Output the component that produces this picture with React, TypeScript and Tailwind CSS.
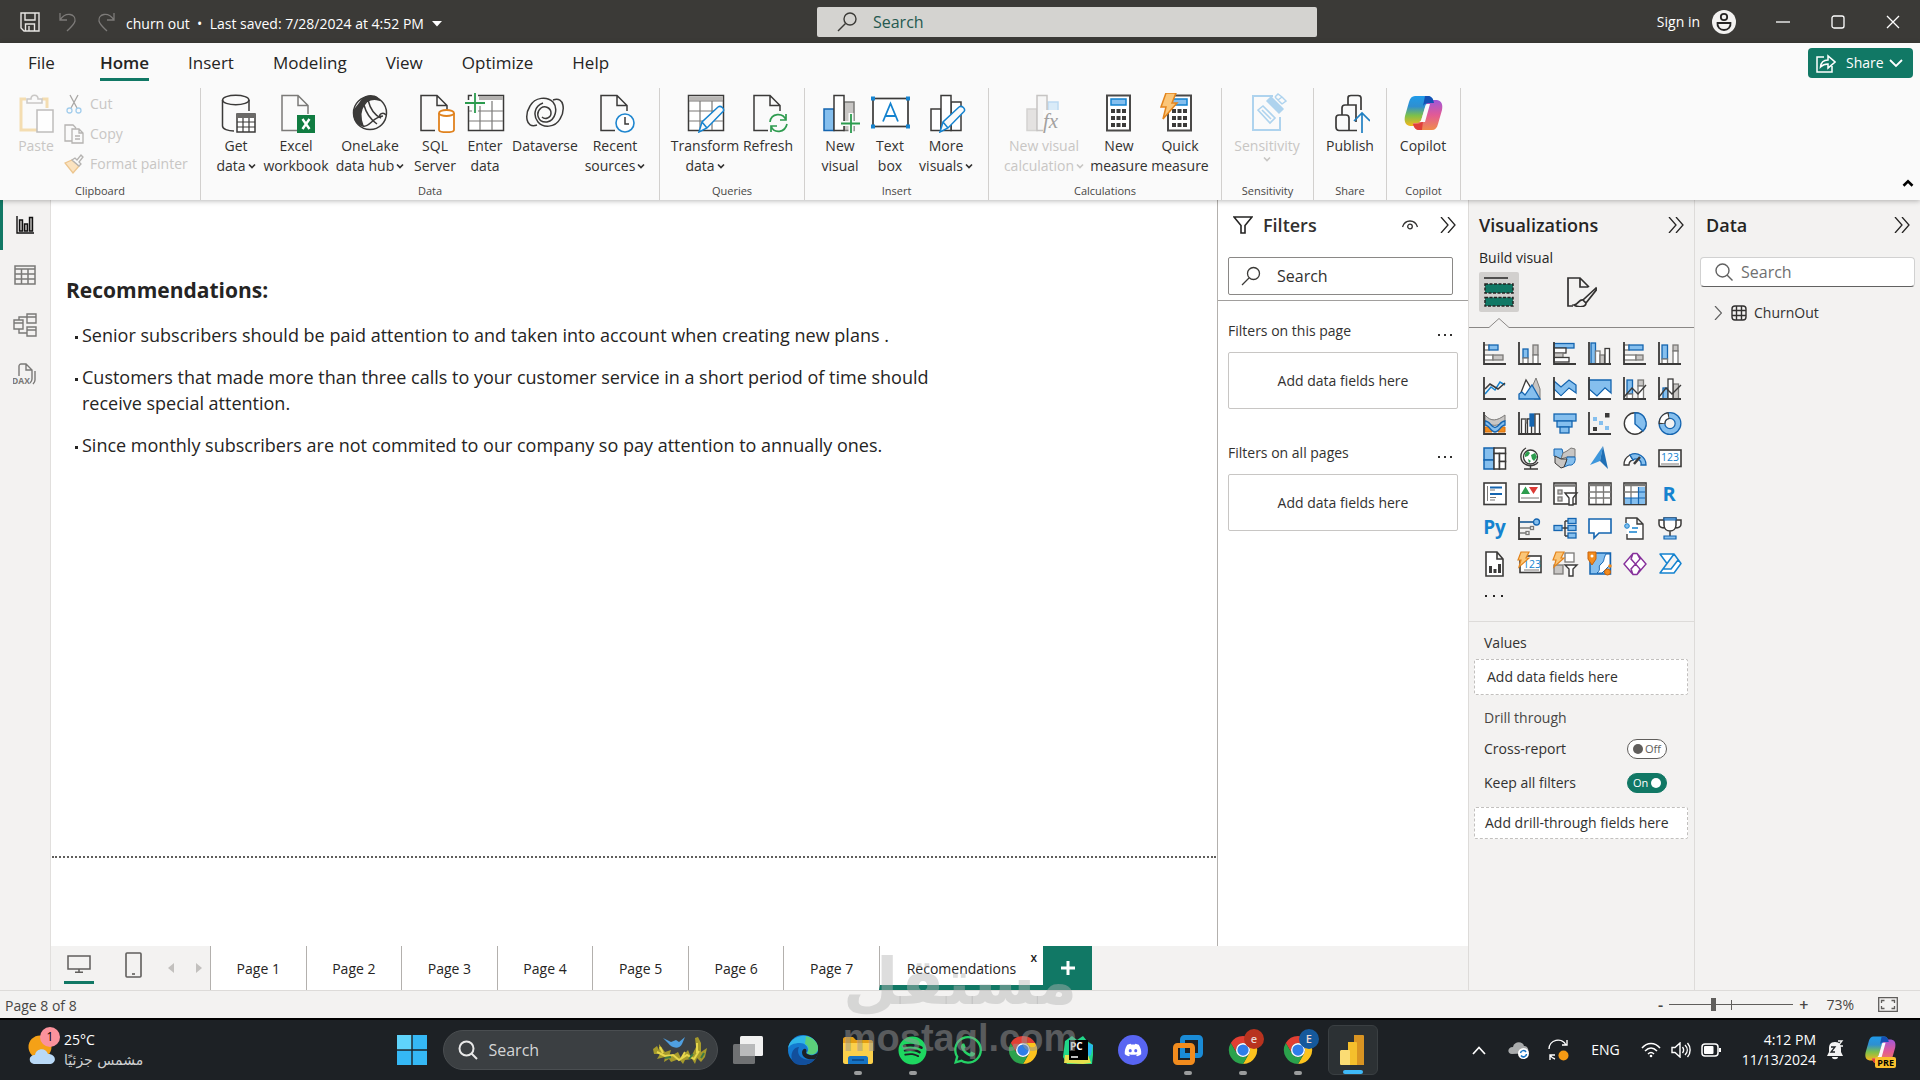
import React from "react";
import type { ReactNode } from "react";
import { FaDiscord, FaSpotify, FaWhatsapp } from "react-icons/fa";

const INK = "#3b3a39";
const BLUE = "#1565b0";
const SKY = "#85bfee";
const MID = "#7a7977";
const LIGHT = "#c8c6c4";

type Box = [number, number, number, number, string, string];

/* Plain rectangles given as [x, y, width, height, fill, stroke] */
function Boxes({ list, sw = 1.3 }: { list: Box[]; sw?: number }) {
  return (
    <>
      {list.map(([x, y, w, h, f, s], i) => (
        <rect key={i} x={x} y={y} width={w} height={h} fill={f} stroke={s} strokeWidth={sw} />
      ))}
    </>
  );
}

function Axis() {
  return <path d="M1 0V22H23" fill="none" stroke={INK} strokeWidth="1.8" />;
}

/* ---------- Ribbon icons (40 x 40) ---------- */

function Big({ children }: { children: ReactNode }) {
  return (
    <svg viewBox="0 0 40 40" className="size-10 shrink-0" fill="none" stroke={INK} strokeWidth="1.5" aria-hidden="true">
      {children}
    </svg>
  );
}

const Doc = () => <path d="M20 37.5H6V2.5H22L32 12.5V18M22 2.5V12.5H32" />;
const Pencil = () => (
  <path d="M14 39L17 29L33 14C36 12 40 16 38 18.500L22 35ZM17 29L22 35" fill="#fafafa" stroke="#1583cf" />
);
const CalcPad = ({ x }: { x: number }) => (
  <g>
    <rect x={x} y="2.500" width="23" height="35" fill="#fff" stroke="#4a4948" strokeWidth="2" />
    <rect x={x + 4} y="6" width="15" height="6" fill={SKY} stroke="#1583cf" />
    {[16, 23, 30].map((y) =>
      [4, 9.5, 15].map((dx) => <rect key={`${y}-${dx}`} x={x + dx} y={y} width="4" height="4" fill={INK} stroke="none" />)
    )}
  </g>
);

const ribbonIcons: Record<string, ReactNode> = {
  paste: (
    <Big>
      <g opacity=".85">
        <path d="M10 6H5V37H21M26 6H31V15" stroke="#f3d9a5" strokeWidth="3" />
        <path d="M11 10V6H15C15 1 22 1 22 6H26V10Z" fill="#fafafa" stroke="#c2c0be" />
        <rect x="21" y="17" width="16" height="22" fill="#fff" stroke="#b5b3b1" />
      </g>
    </Big>
  ),
  getData: (
    <Big>
      <path d="M6.500 7V33C6.500 36 12 38 18 38M33 7V18" />
      <ellipse cx="19.750" cy="7" rx="13.200" ry="4.800" />
      <rect x="21" y="21" width="18" height="18" fill="#fff" />
      <path d="M21 23H39" strokeWidth="4" stroke="#6b6a68" />
      <path d="M21 29H39M21 34H39M27 25V39M33 25V39" strokeWidth="1.200" />
    </Big>
  ),
  excel: (
    <Big>
      <path d="M22 37.500H6V2.500H22L32 12.500V21M22 2.500V12.500H32" stroke="#7b7a78" />
      <rect x="21" y="22" width="18" height="18" fill="#107c41" stroke="none" />
      <path d="M26.500 26L33.500 36M33.500 26L26.500 36" stroke="#fff" strokeWidth="2.400" />
    </Big>
  ),
  oneLake: (
    <Big>
      <circle cx="20" cy="20" r="16.500" />
      <path d="M12 7C17 1 27 2 29 7C23 5 17 7 14 12C10 17 10 25 13 33C7 31 3 25 4 18C6 14 9 12 12 7Z" fill={INK} />
      <path d="M14 12C16 20 20 26 27 31M18 7C20 15 24 22 31 25C27 22 33 18 36 22M13 33C20 35 22 24 33 23" />
    </Big>
  ),
  sql: (
    <Big>
      <Doc />
      <path d="M24 20V37C24 40 39 40 39 37V20" fill="#fff" stroke="#e0821e" strokeWidth="1.800" />
      <ellipse cx="31.500" cy="20" rx="7.500" ry="3" fill="#fff" stroke="#e0821e" strokeWidth="1.800" />
    </Big>
  ),
  enter: (
    <Big>
      <rect x="3.500" y="2.500" width="35" height="35" fill="#fff" />
      <path d="M14 5H38" stroke="#b3b1af" strokeWidth="4" />
      <path d="M4 18H38M4 28H38M15 8V37M27 8V37" strokeWidth="1.200" stroke={MID} />
      <path d="M0 10H20M10 0V20" stroke="#fafafa" strokeWidth="6" />
      <path d="M0 10H20M10 0V20" stroke="#2b9b4e" strokeWidth="1.800" />
    </Big>
  ),
  dataverse: (
    <Big>
      <path d="M12 32C0 36 0 21 5 13C10 4 22 3 28 9C33 15 31 27 22 29C13 30 10 20 16 15C20 12 26 15 26 20C26 25 20 27 17 24" />
      <path d="M28 7C40 3 40 18 35 26C30 35 18 35 13 29C8 23 9 13 18 10" />
    </Big>
  ),
  recent: (
    <Big>
      <Doc />
      <circle cx="30" cy="30" r="9" fill="#fff" stroke="#1f86cf" strokeWidth="1.600" />
      <path d="M30 24V31H34" />
    </Big>
  ),
  transform: (
    <Big>
      <rect x="3.500" y="2.500" width="35" height="35" fill="#fff" />
      <path d="M4 5.500H38" stroke="#b9b7b5" strokeWidth="4" />
      <path d="M4 8H38M4 18H38M4 28H38M15 8V37M27 8V37" strokeWidth="1.200" stroke={MID} />
      <Pencil />
    </Big>
  ),
  refresh: (
    <Big>
      <Doc />
      <path d="M22 29C23 20 35 19 38 27M38 21V27H32M39 31C37 40 26 41 23 33M23 39V33H29" stroke="#2e9b4f" strokeWidth="1.700" />
    </Big>
  ),
  newVisual: (
    <Big>
      <Boxes sw={1.5} list={[[4, 16, 10, 21.5, SKY, BLUE], [24, 9, 10, 28.500, LIGHT, MID], [14, 2.500, 10, 35, "#fff", INK]]} />
      <path d="M20 30.500H40M31 20V40" stroke="#fafafa" strokeWidth="5" />
      <path d="M21 30.500H40M31 21V40" stroke="#2b9b4e" strokeWidth="1.800" />
    </Big>
  ),
  textBox: (
    <Big>
      <rect x="3" y="5.500" width="35" height="28" fill="#fff" strokeWidth="1.700" />
      {[[1, 3.5], [36, 3.5], [1, 31.500], [36, 31.500]].map(([x, y]) => (
        <rect key={`${x}-${y}`} x={x} y={y} width="4" height="4" fill="#1583cf" stroke="none" />
      ))}
      <path d="M13 28.500L20.500 10.500L28 28.500M15.500 23H25.500" stroke="#1583cf" strokeWidth="1.800" />
    </Big>
  ),
  moreVisuals: (
    <Big>
      <Boxes sw={1.500} list={[[5, 16, 10, 21.500, "#fff", INK], [25, 9, 10, 28.500, "#fff", INK], [15, 2.500, 10, 35, "#fff", INK]]} />
      <Pencil />
    </Big>
  ),
  visualCalc: (
    <Big>
      <g opacity=".75">
        <Boxes sw={1.500} list={[[3, 16, 10, 21.500, "#dddbd9", LIGHT], [24, 9, 10, 12, "#cfe6f8", "#a9d0ef"], [13, 2.500, 10, 35, "#f5f5f5", "#b5b3b1"]]} />
      </g>
      <rect x="19" y="17" width="20" height="22" fill="#fafafa" stroke="none" />
      <text x="19" y="35" fontSize="21" fontStyle="italic" fontFamily="Liberation Serif, serif" fill="#a3a19f" stroke="none">
        fx
      </text>
    </Big>
  ),
  newMeasure: (
    <Big>
      <CalcPad x={8} />
    </Big>
  ),
  quickMeasure: (
    <Big>
      <CalcPad x={8} />
      <path d="M6 0H16L12 10H17L3 26L6 14H1Z" fill="#fbc678" stroke="#e3841c" />
    </Big>
  ),
  sensitivity: (
    <Big>
      <g stroke="#aed3ee">
        <path d="M26 3H6V37H33V24" strokeWidth="2" />
        <path d="M11 17L16 13L28 25L23 30ZM15 17L24 26" strokeWidth="1.600" />
        <path d="M20 8L32 20L36 16L24 4Z" fill="#aed3ee" />
        <path d="M28 4L31 1L35 4L39 8L35 11M28 4L35 11M35 4L31 7" />
      </g>
    </Big>
  ),
  publish: (
    <Big>
      <path d="M12 22V15C12 13 13 12 15 12H18V5C18 3 19 2.500 21 2.500H28C30 2.500 31 3.500 31 5V17M26 26V12H18M6 25C6 23 7 22 9 22H16C18 22 19 23 19 25V37.500H9C7 37.500 6 36 6 34ZM26 29V12M19 37.500H27" strokeWidth="1.700" />
      <path d="M32 40V20M24 28L32 20L40 28" stroke="#1f7fc2" strokeWidth="1.700" />
    </Big>
  ),
  copilot: <CopilotLogo id="ribbon" className="size-10" />,
};

function CopilotLogo({ id, className }: { id: string; className: string }) {
  const shape = "M12 3H25C28 3 30 5 31 10H28C24 10 23 12 22 15L18 28C17 32 15 33 12 33H7C2 32 1 28 2 23L6 9C7 5 9 3 12 3Z";
  return (
    <svg viewBox="0 0 40 40" className={className} aria-hidden="true">
      <defs>
        <linearGradient id={`${id}-cool`} x1="0" y1="0" x2="0" y2="1">
          <stop offset="0" stopColor="#1f9bea" />
          <stop offset=".35" stopColor="#2f8fd0" />
          <stop offset=".65" stopColor="#7cc04b" />
          <stop offset="1" stopColor="#f6b71c" />
        </linearGradient>
        <linearGradient id={`${id}-warm`} x1="0" y1="1" x2="0" y2="0">
          <stop offset="0" stopColor="#a157d8" />
          <stop offset=".5" stopColor="#e25a95" />
          <stop offset="1" stopColor="#f08c4a" />
        </linearGradient>
      </defs>
      <path d={shape} fill={`url(#${id}-cool)`} />
      <path d={shape} fill={`url(#${id}-warm)`} transform="rotate(180 20.500 20)" />
      <path d="M22 3H25C28 3 30 5 31 10H28C24 10 22 10 20 13Z" fill="#1450b4" />
      <path d="M19 37H16C13 37 11 35 10 31H13C16 31 18 30 20 28Z" fill="#e0403a" />
      <path d="M24 11H27L22 29H16C17 29 18 28 18.500 26L22 14C22.500 12 23 11 24 11Z" fill="#fafafa" />
    </svg>
  );
}

function Caret({ className = "w-2", thin = false }: { className?: string; thin?: boolean }) {
  return (
    <svg viewBox="0 0 8 6" className={`inline-block ${className}`} fill="none" stroke="currentColor" strokeWidth={thin ? 0.9 : 1.7} aria-hidden="true">
      <path d="M1 1.500L4 4.500L7 1.500" />
    </svg>
  );
}

type RibbonItem = { icon: string; lines: string[]; width: string; caret?: boolean; disabled?: boolean };

const dataItems: RibbonItem[] = [
  { icon: "getData", lines: ["Get", "data"], width: "w-[50px]", caret: true },
  { icon: "excel", lines: ["Excel", "workbook"], width: "w-[70px]" },
  { icon: "oneLake", lines: ["OneLake", "data hub"], width: "w-[78px]", caret: true },
  { icon: "sql", lines: ["SQL", "Server"], width: "w-[52px]" },
  { icon: "enter", lines: ["Enter", "data"], width: "w-12" },
  { icon: "dataverse", lines: ["Dataverse"], width: "w-[72px]" },
  { icon: "recent", lines: ["Recent", "sources"], width: "w-[68px]", caret: true },
];
const queryItems: RibbonItem[] = [
  { icon: "transform", lines: ["Transform", "data"], width: "w-[70px]", caret: true },
  { icon: "refresh", lines: ["Refresh"], width: "w-14" },
];
const insertItems: RibbonItem[] = [
  { icon: "newVisual", lines: ["New", "visual"], width: "w-[50px]" },
  { icon: "textBox", lines: ["Text", "box"], width: "w-[50px]" },
  { icon: "moreVisuals", lines: ["More", "visuals"], width: "w-[62px]", caret: true },
];
const calcItems: RibbonItem[] = [
  { icon: "visualCalc", lines: ["New visual", "calculation"], width: "w-[90px]", caret: true, disabled: true },
  { icon: "newMeasure", lines: ["New", "measure"], width: "w-[60px]" },
  { icon: "quickMeasure", lines: ["Quick", "measure"], width: "w-[62px]" },
];

function RibbonButton({ item }: { item: RibbonItem }) {
  return (
    <button
      type="button"
      disabled={item.disabled}
      className={`${item.width} flex shrink-0 flex-col items-center text-sm leading-5 whitespace-nowrap ${item.disabled ? "text-[#c8c6c4]" : "text-[#323130]"}`}
    >
      {ribbonIcons[item.icon]}
      <span className="mt-[3px]">{item.lines[0]}</span>
      <span className="flex items-center gap-0.5">
        {item.lines[1]}
        {item.caret && <Caret />}
      </span>
    </button>
  );
}

function Group({ label, width, children }: { label: string; width: string; children: ReactNode }) {
  return (
    <section className={`${width} flex flex-col border-r border-[#d2d0ce]`} aria-label={label}>
      <div className="flex pt-[5px] pl-2.5">{children}</div>
      <p className="mt-auto pb-px text-center text-[11px] leading-4 text-[#484644]">{label}</p>
    </section>
  );
}

function TitleBar() {
  return (
    <header className="flex h-[43px] shrink-0 items-center bg-[#3b3a37] text-white">
      <div className="flex w-[42.55%] items-center">
        <button type="button" aria-label="Save" className="ml-5">
          <svg viewBox="0 0 20 20" className="size-5" fill="none" stroke="#e8e6e4" strokeWidth="1.400">
            <path d="M1 1H19V19H4L1 16ZM5 1V8H15V1M5.500 19V12H14.500V19M9 14V19" />
          </svg>
        </button>
        <button type="button" aria-label="Undo" className="ml-[18px]">
          <svg viewBox="0 0 20 20" className="size-5" fill="none" stroke="#7d7b79" strokeWidth="1.300">
            <path d="M2 1V8H9M2 8C8 -1 18 2 17 9C16 13 12 16 9 19" />
          </svg>
        </button>
        <button type="button" aria-label="Redo" className="ml-[18px]">
          <svg viewBox="0 0 20 20" className="size-5" fill="none" stroke="#7d7b79" strokeWidth="1.300">
            <path d="M18 1V8H11M18 8C12 -1 2 2 3 9C4 13 8 16 11 19" />
          </svg>
        </button>
        <button type="button" className="mt-1 ml-2.5 flex items-center gap-2 text-sm whitespace-pre">
          churn out  •  Last saved: 7/28/2024 at 4:52 PM
          <svg viewBox="0 0 10 6" className="w-2.5" fill="#fff" aria-hidden="true">
            <path d="M0 0H10L5 5.500Z" />
          </svg>
        </button>
      </div>
      <label className="flex h-[30px] w-[500px] items-center gap-4 rounded-xs bg-[#d4d3d0] px-5">
        <svg viewBox="0 0 20 20" className="size-5" fill="none" stroke="#3b3a37" strokeWidth="1.400" aria-hidden="true">
          <circle cx="13" cy="7" r="6" />
          <path d="M8.500 11.500L1 19" />
        </svg>
        <input aria-label="Search" placeholder="Search" className="min-w-0 flex-1 bg-transparent text-base outline-none placeholder:text-[#25594f]" />
      </label>
      <div className="flex flex-1 items-center justify-end">
        <button type="button" className="flex items-center gap-3 text-sm">
          Sign in
          <svg viewBox="0 0 24 24" className="size-6" fill="none" stroke="#252423" strokeWidth="1.800" aria-hidden="true">
            <circle cx="12" cy="12" r="12" fill="#f3f2f1" stroke="none" />
            <circle cx="12" cy="7" r="3.200" />
            <path d="M5.500 13H18.500C19 17 16 20 12 20S5 17 5.500 13Z" />
          </svg>
        </button>
        <button type="button" aria-label="Minimize" className="ml-10">
          <svg viewBox="0 0 14 14" className="size-3.5" stroke="#fff" strokeWidth="1.300">
            <path d="M0 7H14" />
          </svg>
        </button>
        <button type="button" aria-label="Maximize" className="ml-[41px]">
          <svg viewBox="0 0 14 14" className="size-3.5" stroke="#fff" fill="none" strokeWidth="1.300">
            <rect x="1" y="1" width="12" height="12" rx="2" />
          </svg>
        </button>
        <button type="button" aria-label="Close" className="mr-5 ml-[41px]">
          <svg viewBox="0 0 14 14" className="size-3.5" stroke="#fff" strokeWidth="1.300">
            <path d="M1 1L13 13M13 1L1 13" />
          </svg>
        </button>
      </div>
    </header>
  );
}

function Ribbon() {
  return (
    <div className="relative z-10 flex shrink-0 flex-col bg-[#fafafa] shadow-[0_1px_5px_rgba(0,0,0,0.28)]">
      <nav className="flex h-[45px] items-start justify-between pr-[7px] text-[17px] text-[#252423]">
        <div className="flex gap-[39px] pt-2 pl-7">
          {["File", "Home", "Insert", "Modeling", "View", "Optimize", "Help"].map((t) => (
            <a
              key={t}
              href="#"
              className={`leading-6 ${t === "Home" ? "border-b-3 border-[#117865] pb-[3px] font-semibold" : ""} ${t === "File" ? "mr-1.5" : ""}`}
            >
              {t}
            </a>
          ))}
        </div>
        <button type="button" className="mt-[5px] flex h-[30px] w-[105px] items-center rounded bg-[#117865] pl-2 text-sm text-white">
          <svg viewBox="0 0 20 20" className="size-5" fill="none" stroke="#fff" strokeWidth="1.500" aria-hidden="true">
            <path d="M8 4H1V19H16V13M4.500 14C5 9 8 7 12 7V3L19 9L12 15V11C9 11 6.500 12 4.500 14Z" />
          </svg>
          <span className="ml-2.5">Share</span>
          <Caret className="ml-1 w-4" thin />
        </button>
      </nav>
      <div className="flex h-[112px] items-stretch">
        <section className="flex w-[201px] flex-col border-r border-[#d2d0ce]" aria-label="Clipboard">
          <div className="flex pt-[5px] pl-4 text-sm text-[#c8c6c4]">
            <button type="button" disabled className="flex w-10 flex-col items-center leading-5">
              {ribbonIcons.paste}
              <span className="mt-[3px]">Paste</span>
            </button>
            <div className="-mt-1 flex flex-col pl-2">
              <button type="button" disabled className="flex h-[30px] items-center gap-1.5">
                <svg viewBox="0 0 20 20" className="size-5" fill="none" stroke="#a9a7a5" strokeWidth="1.300" aria-hidden="true">
                  <path d="M6 1L13 14M14 1L7 14" />
                  <circle cx="5.500" cy="16.500" r="2.500" stroke="#a3cdec" />
                  <circle cx="14.500" cy="16.500" r="2.500" stroke="#a3cdec" />
                </svg>
                Cut
              </button>
              <button type="button" disabled className="flex h-[30px] items-center gap-1.5">
                <svg viewBox="0 0 20 20" className="size-5" fill="#fafafa" stroke="#b5b3b1" strokeWidth="1.300" aria-hidden="true">
                  <path d="M8 17H1V1H9L12 4M8 5V19H19V9L15 5ZM15 5V9H19M11 12H16M11 15H16" />
                </svg>
                Copy
              </button>
              <button type="button" disabled className="flex h-[30px] items-center gap-1.5 whitespace-nowrap">
                <svg viewBox="0 0 20 20" className="size-5" fill="#fafafa" stroke="#b5b3b1" strokeWidth="1.300" aria-hidden="true">
                  <path d="M1 9L8 6L15 12L9 19Z" fill="#fbe3c0" stroke="#ecc58e" />
                  <path d="M8 6L11 4L13 6L17 1L19 3L15 8L17 10L15 12Z" />
                </svg>
                Format painter
              </button>
            </div>
          </div>
          <p className="mt-auto pb-px text-center text-[11px] leading-4 text-[#484644]">Clipboard</p>
        </section>
        <Group label="Data" width="w-[459px]">{dataItems.map((i) => <RibbonButton key={i.icon} item={i} />)}</Group>
        <Group label="Queries" width="w-[145px]">{queryItems.map((i) => <RibbonButton key={i.icon} item={i} />)}</Group>
        <Group label="Insert" width="w-[184px]">{insertItems.map((i) => <RibbonButton key={i.icon} item={i} />)}</Group>
        <Group label="Calculations" width="w-[233px]">{calcItems.map((i) => <RibbonButton key={i.icon} item={i} />)}</Group>
        <Group label="Sensitivity" width="w-[92px]">
          <RibbonButton item={{ icon: "sensitivity", lines: ["Sensitivity", ""], width: "w-[70px]", caret: true, disabled: true }} />
        </Group>
        <Group label="Share" width="w-[73px]">
          <RibbonButton item={{ icon: "publish", lines: ["Publish"], width: "w-[52px]" }} />
        </Group>
        <Group label="Copilot" width="w-[74px]">
          <RibbonButton item={{ icon: "copilot", lines: ["Copilot"], width: "w-[52px]" }} />
        </Group>
        <button type="button" aria-label="Collapse ribbon" className="mt-auto mr-1.5 mb-1.5 ml-auto">
          <Caret className="w-3 rotate-180" />
        </button>
      </div>
    </div>
  );
}

function ViewRail() {
  const item = "flex h-[50px] items-center justify-center border-l-3 pr-[3px]";
  return (
    <nav className="flex w-[51px] shrink-0 flex-col border-r border-[#e1dfdd] bg-[#f3f2f1]" aria-label="Views">
      <button type="button" aria-label="Report view" className={`${item} border-[#117865]`}>
        <svg viewBox="0 0 18 18" className="size-[18px]" fill="#b3b1af" stroke="#111" strokeWidth="1.400">
          <path d="M1 0V17H18" fill="none" />
          <path d="M3.500 4H6.500V15H3.500ZM8.500 8H11.500V15H8.500ZM13.500 1.500H16.500V15H13.500Z" />
        </svg>
      </button>
      <button type="button" aria-label="Table view" className={`${item} border-transparent`}>
        <svg viewBox="0 0 22 20" className="w-[22px]" fill="none" stroke="#7a7977" strokeWidth="1.500">
          <path d="M1 1H21V19H1ZM1 4H21M1 9H21M1 14H21M7.500 4V19M14 4V19" />
        </svg>
      </button>
      <button type="button" aria-label="Model view" className={`${item} border-transparent`}>
        <svg viewBox="0 0 24 24" className="size-6" fill="none" stroke="#7a7977" strokeWidth="1.400">
          <path d="M14 1H23V10H14ZM14 4H23M1 7H10V16H1ZM1 10H10M14 14H23V23H14ZM14 17H23M6 7V4H14M6 16V20H14" />
        </svg>
      </button>
      <button type="button" aria-label="DAX query view" className={`${item} border-transparent`}>
        <svg viewBox="0 0 24 24" className="size-6" fill="none" stroke="#7a7977" strokeWidth="1.400">
          <path d="M6 13V3C6 2 7 1 8 1H13L19 7V16C19 18 18 19 17 20M13 1V7H19M22 8V17C22 19 21 20 20 21" />
          <text x="-1" y="21" fontSize="8.500" fontWeight="700" fontFamily="Open Sans, sans-serif" fill="#7a7977" stroke="none">DAX</text>
        </svg>
      </button>
    </nav>
  );
}

function Chevrons() {
  return (
    <svg viewBox="0 0 16 16" className="size-4" fill="none" stroke="#252423" strokeWidth="1.300" aria-hidden="true">
      <path d="M1 0L8 8L1 16M8 0L15 8L8 16" />
    </svg>
  );
}

function FilterSection({ title }: { title: string }) {
  return (
    <section className="mb-[34px]">
      <div className="flex items-center justify-between pr-1.5 text-sm leading-5">
        <h3>{title}</h3>
        <button type="button" aria-label={`${title} options`}>
          <Dots />
        </button>
      </div>
      <div className="mt-[11px] flex h-[57px] items-center justify-center rounded-xs border border-[#c8c6c4] text-sm">Add data fields here</div>
    </section>
  );
}

function Dots() {
  return (
    <svg viewBox="0 0 14 4" className="w-3.5 translate-y-1" fill="#323130" aria-hidden="true">
      <path d="M0 1H2V3H0ZM6 1H8V3H6ZM12 1H14V3H12Z" />
    </svg>
  );
}

function Filters() {
  return (
    <aside className="w-[251px] shrink-0 border-l border-[#b3b0ad] bg-white text-[#323130]">
      <div className="flex h-[50px] items-center pr-3 pl-[15px]">
        <svg viewBox="0 0 20 18" className="w-5" fill="none" stroke="#252423" strokeWidth="1.600" aria-hidden="true">
          <path d="M1 1H19L12 9.500V17H8V9.500Z" />
        </svg>
        <h2 className="ml-2.5 flex-1 text-lg font-semibold">Filters</h2>
        <button type="button" aria-label="Show filter pane" className="mr-[22px]">
          <svg viewBox="0 0 16 10" className="w-4" fill="none" stroke="#323130" strokeWidth="1.300">
            <path d="M.500 7C3 -1 13 -1 15.500 7" />
            <circle cx="8" cy="6.500" r="2.300" />
          </svg>
        </button>
        <button type="button" aria-label="Collapse filters">
          <Chevrons />
        </button>
      </div>
      <div className="border-b border-[#a19f9d] pt-[7px] pr-[15px] pb-[5px] pl-2.5">
        <label className="flex h-[38px] items-center gap-4 rounded-xs border border-[#8a8886] px-3">
          <svg viewBox="0 0 20 20" className="size-5" fill="none" stroke="#3b3a37" strokeWidth="1.300" aria-hidden="true">
            <circle cx="12.500" cy="7.500" r="6" />
            <path d="M8 12L1 19" />
          </svg>
          <input aria-label="Search filters" placeholder="Search" className="min-w-0 flex-1 text-base outline-none placeholder:text-[#323130]" />
        </label>
      </div>
      <div className="pt-5 pr-2.5 pl-2.5">
        <FilterSection title="Filters on this page" />
        <FilterSection title="Filters on all pages" />
      </div>
    </aside>
  );
}

/* ---------- Visual gallery icons (24 x 24) ---------- */

const W = "#fff";
const vizIcons: [string, ReactNode][] = [
  ["Stacked bar chart", <><Boxes list={[[1, 3, 5, 5, W, MID], [6, 3, 9, 5, SKY, BLUE], [1, 13, 9, 5, W, MID], [10, 13, 10, 5, LIGHT, MID]]} /><Axis /></>],
  ["Stacked column chart", <><Boxes list={[[5, 7, 5, 9, SKY, BLUE], [5, 16, 5, 6, W, MID], [15, 3, 5, 10, LIGHT, MID], [15, 13, 5, 9, W, MID]]} /><Axis /></>],
  ["Clustered bar chart", <><Boxes list={[[1, 1.5, 20, 4.5, SKY, BLUE], [1, 6, 12, 5, W, INK], [1, 11, 9, 4.5, LIGHT, MID], [1, 15.5, 15, 4.5, W, INK]]} /><Axis /></>],
  ["Clustered column chart", <><Boxes list={[[3, 1, 4.5, 21, SKY, BLUE], [7.5, 9, 4.5, 13, W, MID], [12, 13, 4.5, 9, LIGHT, MID], [17, 6.500, 4.500, 15.500, W, INK]]} /><Axis /></>],
  ["100% stacked bar chart", <><Boxes list={[[1, 3, 5, 5, W, MID], [6, 3, 14, 5, SKY, BLUE], [1, 13, 12, 5, W, MID], [13, 13, 7, 5, LIGHT, MID]]} /><Axis /></>],
  ["100% stacked column chart", <><Boxes list={[[4, 3, 5.5, 14, SKY, BLUE], [4, 17, 5.5, 5, W, MID], [15, 3, 5, 6, LIGHT, MID], [15, 9, 5, 13, W, MID]]} /><Axis /></>],
  ["Line chart", <><path d="M2 17L8 10L12 13L17 5L22 8" fill="none" stroke="#1583cf" strokeWidth="1.500" /><path d="M2 12L7 7L15 12L22 6" fill="none" stroke={INK} strokeWidth="1.500" /><Axis /></>],
  ["Area chart", <><path d="M12 15L18 1L22 12V22H16Z" fill={LIGHT} stroke={MID} /><path d="M2 18L8 3L16 16L12 20Z" fill={W} stroke={INK} strokeWidth="1.300" /><path d="M1 22V17L4 15L7 18L14 8L22 22Z" fill={SKY} stroke={BLUE} strokeWidth="1.300" /></>],
  ["Stacked area chart", <><path d="M1 4L8 10L16 3L23 8V16L16 11L8 19L1 12Z" fill={SKY} stroke={BLUE} strokeWidth="1.300" /><path d="M2 14L8 19.500L16 12L23 17V22H2Z" fill={W} /><Axis /></>],
  ["100% stacked area chart", <><path d="M1 3H23V16L17 11L9 19L1 12Z" fill={SKY} stroke={BLUE} strokeWidth="1.300" /><path d="M2 14L9 20L17 12L23 17V22H2Z" fill={W} /><Axis /></>],
  ["Line and stacked column chart", <><Boxes list={[[4, 3, 5.5, 14, SKY, BLUE], [4, 17, 5.5, 5, W, MID], [15, 3, 5.5, 6, LIGHT, MID], [15, 9, 5.5, 13, W, MID]]} /><path d="M1 20L9 11L15 17L23 8" fill="none" stroke={INK} strokeWidth="1.400" /><Axis /></>],
  ["Line and clustered column chart", <><Boxes list={[[5, 11, 5, 11, SKY, BLUE], [15, 7, 5.5, 15, LIGHT, MID], [10, 2, 5, 20, W, INK]]} /><path d="M1 20L8 11L14 17L23 8" fill="none" stroke={INK} strokeWidth="1.400" /><Axis /></>],
  ["Ribbon chart", <><path d="M2 15H9V20H2ZM15 15H22V20H15Z" fill="#f28c1e" stroke="#d9730d" /><path d="M2 3C8 10 14 9 22 3V9C14 15 8 15 2 8Z" fill={LIGHT} stroke={MID} /><path d="M2 9C7 9 8 15.500 12 15.500S17 9 22 9V13C18 13 16 20 12 20S6 13 2 13Z" fill={SKY} stroke={BLUE} strokeWidth="1.300" /><Axis /></>],
  ["Waterfall chart", <><Boxes list={[[3.5, 7, 4, 15, W, INK], [8, 7, 4, 4, LIGHT, MID], [9.500, 7, 4, 15, W, INK], [12, 2, 4, 12, BLUE, BLUE], [17, 2, 4.500, 20, W, INK]]} /><Axis /></>],
  ["Funnel", <Boxes list={[[1, 2, 22, 7, SKY, BLUE], [4, 9, 15, 6, SKY, BLUE], [7, 15, 9, 6, SKY, BLUE]]} />],
  ["Scatter chart", <><Boxes sw={0} list={[[17, 1, 4.500, 4.500, INK, INK], [5, 5, 4, 4, SKY, BLUE], [11, 9, 4, 4, SKY, BLUE], [5, 15, 4, 4, INK, INK], [17, 14, 4, 4, SKY, BLUE]]} /><Axis /></>],
  ["Pie chart", <><circle cx="12" cy="11.500" r="10.700" fill={W} stroke={INK} strokeWidth="1.400" /><path d="M12 .800A10.700 10.700 0 0 1 20 19L12 12Z" fill={SKY} stroke={BLUE} strokeWidth="1.400" /></>],
  ["Donut chart", <><circle cx="12" cy="11.500" r="8" fill="none" stroke={BLUE} strokeWidth="7" /><circle cx="12" cy="11.500" r="8" fill="none" stroke={SKY} strokeWidth="4.500" /><path d="M4 12A8 8 0 0 1 11 3.500" fill="none" stroke={INK} strokeWidth="7" /><path d="M4 11A8 8 0 0 1 10 3.800" fill="none" stroke={W} strokeWidth="4.500" /></>],
  ["Treemap", <><Boxes sw={1.5} list={[[1, 1, 10, 12, SKY, BLUE], [1, 13, 10, 9, SKY, BLUE], [11, 1, 11.500, 5.500, W, INK], [11, 6.500, 5.500, 15.500, W, INK], [16.500, 6.500, 6, 8, W, INK], [16.500, 14.500, 6, 7.500, W, INK]]} /></>],
  ["Map", <><circle cx="12.500" cy="10" r="7" fill={W} stroke={INK} strokeWidth="1.300" /><path d="M10 4C8 5 6 8 7 10L10 9L12 6ZM13 8L17 6L19 10L16 14L14 12ZM10 12L13 14L11 16Z" fill="#2d9d4e" /><path d="M8 1C1 5 1 15 9 18C14 20 19 17 20 15M12.500 19V22M6 22H20" fill="none" stroke={INK} strokeWidth="1.400" /></>],
  ["Filled map", <><path d="M1 2H9L10 6L8 12L1 9Z" fill={SKY} stroke={BLUE} /><path d="M10 6L14 4L18 1L22 2V10H14L8 12Z" fill={LIGHT} stroke={MID} /><path d="M22 10C23 15 20 19 16 18L11 20L13 15L14 10Z" fill={SKY} stroke={BLUE} /><path d="M2 9L8 12H14L13 15L11 20L8 21L2 16Z" fill={LIGHT} stroke={INK} /></>],
  ["Azure map", <><path d="M15 -1L2 18L12 14Z" fill="#3d97dc" /><path d="M15 -1L12 14L20 22Z" fill="#1f6fb5" /></>],
  ["Gauge", <><path d="M1 18A11 11 0 0 1 7 8L10 13A5 5 0 0 0 6 18Z" fill={W} stroke={INK} strokeWidth="1.300" /><path d="M7 8A11 11 0 0 1 23 18H18A5 5 0 0 0 10 13Z" fill={SKY} stroke={BLUE} strokeWidth="1.300" /><path d="M11 17L17 10" stroke={INK} strokeWidth="2.500" /></>],
  ["Card", <><rect x="1" y="3" width="22" height="16.500" fill={W} stroke={INK} strokeWidth="1.600" /><text x="12" y="14" textAnchor="middle" fontSize="10.500" fontFamily="Open Sans, sans-serif" fill="#1583cf">123</text><path d="M3 17H21" stroke={MID} /></>],
  ["Multi-row card", <><rect x="1" y="1" width="22" height="21.500" fill={W} stroke={INK} strokeWidth="1.600" /><path d="M4.500 4V19M7 8H12M7 15.500H13" stroke={MID} /><path d="M7 5.500H19M7 12H19" stroke={BLUE} strokeWidth="1.800" /><path d="M7 18H12" stroke={MID} /></>],
  ["KPI", <><rect x="1" y="2" width="22" height="18" fill={W} stroke={INK} strokeWidth="1.600" /><path d="M3 12L7.500 4.500L12 12Z" fill="#2d9d4e" /><path d="M11 5H20L15.500 12Z" fill="#dc3a35" /><path d="M3 16H21" stroke={MID} /></>],
  ["Slicer", <><rect x="1" y="1" width="22" height="21" fill={W} stroke={INK} strokeWidth="1.600" /><path d="M1 3.500H23" stroke={MID} strokeWidth="2.500" /><Boxes list={[[5, 8, 4, 4, LIGHT, MID], [5, 15, 4, 4, LIGHT, MID]]} /><path d="M12 11H24L20 16V23H16V16Z" fill={W} stroke={INK} strokeWidth="1.400" /></>],
  ["Table", <><rect x="1" y="1" width="22" height="21.500" fill={W} stroke={INK} strokeWidth="1.600" /><path d="M1 3H23" stroke={MID} strokeWidth="2.500" /><path d="M1 10H23M1 16H23M8 4V22M15.500 4V22" stroke={MID} strokeWidth="1.300" /></>],
  ["Matrix", <><rect x="1" y="1" width="22" height="21.500" fill={W} stroke={INK} strokeWidth="1.600" /><path d="M15.500 5H22V22H2V16H15.500Z" fill={SKY} /><path d="M1 3H23" stroke={MID} strokeWidth="2.500" /><path d="M1 10H15M8 4V16" stroke={MID} strokeWidth="1.300" /><path d="M1 16H22M15.500 5V22M8 16V22M16 10H22" stroke={BLUE} strokeWidth="1.200" /></>],
  ["R script visual", <text x="11" y="18.500" textAnchor="middle" fontSize="20" fontWeight="700" fontFamily="Open Sans, sans-serif" fill="#1583cf">R</text>],
  ["Python visual", <text x="11.500" y="17" textAnchor="middle" fontSize="19" fontWeight="700" fontFamily="Open Sans, sans-serif" fill="#1583cf">Py</text>],
  ["Key influencers", <><path d="M2 5H16M2 11H13M2 16H8" stroke={MID} strokeWidth="1.300" /><path d="M2 5H16" stroke={BLUE} strokeWidth="1.300" /><circle cx="18.500" cy="5" r="3" fill={SKY} stroke={BLUE} strokeWidth="1.300" /><Boxes list={[[12.500, 9.500, 3, 3, W, MID], [8, 14.500, 3, 3, W, MID]]} /><Axis /></>],
  ["Decomposition tree", <><path d="M8 11H16M12 4V19M12 4H16M12 19H16" fill="none" stroke={INK} strokeWidth="1.400" /><Boxes list={[[1, 8.500, 8, 5, SKY, BLUE], [15, 1.500, 8, 5, SKY, BLUE], [15, 8.500, 8, 5, SKY, BLUE], [15, 16, 8, 5, SKY, BLUE]]} /></>],
  ["Q&A", <path d="M1 2H23V16H11L6 21V16H1Z" fill={W} stroke={BLUE} strokeWidth="1.600" />],
  ["Narrative", <><path d="M3 6V1H14L20 7V22H4V17M14 1V7H20" fill={W} stroke={INK} strokeWidth="1.400" /><circle cx="4" cy="9" r="2.300" fill={SKY} stroke="#1583cf" /><path d="M9 11H15M6 15H14" stroke="#1583cf" strokeWidth="1.300" /></>],
  ["Metrics", <><path d="M6 1H18V8C18 16 6 16 6 8ZM6 3H1V7C1 10 4 11 7 11M18 3H23V7C23 10 20 11 17 11M12 14V19" fill={W} stroke={INK} strokeWidth="1.500" /><path d="M6 1H18V3H6ZM6 19H18V22H6Z" fill={SKY} stroke={BLUE} strokeWidth="1.200" /></>],
  ["Paginated report", <><path d="M3 0H14L20 7V24H3ZM14 0V7H20" fill={W} stroke={INK} strokeWidth="1.600" /><path d="M6 14H9V21H6ZM10.500 17H13.500V21H10.500ZM15 12H18V21H15Z" fill={INK} /></>],
  ["Card (new)", <><rect x="2" y="4" width="21" height="16.500" fill={W} stroke={INK} strokeWidth="1.600" /><text x="14" y="15.500" textAnchor="middle" fontSize="10.500" fontFamily="Open Sans, sans-serif" fill="#1583cf">123</text><path d="M6 18H21" stroke={MID} /><path d="M3 0H11L8 6H11L1 15L3 8H0Z" fill="#fbc678" stroke="#e3841c" strokeWidth="1.200" /></>],
  ["Slicer (new)", <><Boxes list={[[12, 1, 9, 9, W, MID], [1, 13, 9, 9, LIGHT, MID]]} /><path d="M12 13H24L20 17V24H16V17Z" fill={W} stroke={INK} strokeWidth="1.400" /><path d="M3 0H11L8 6H11L1 15L3 8H0Z" fill="#fbc678" stroke="#e3841c" strokeWidth="1.200" /></>],
  ["ArcGIS maps", <><rect x="2" y="1" width="20.500" height="21" fill={SKY} stroke={BLUE} strokeWidth="1.500" /><path d="M18 2H22V13L14 21H9C14 17 9 15 13 12S15 7 18 2Z" fill={W} stroke={BLUE} /><path d="M4 13L0 7V0H8V7Z" fill="#f28c1e" stroke="#c96208" /><circle cx="4" cy="4" r="1.500" fill="#fff" /><circle cx="19.500" cy="20" r="3" fill="#f28c1e" stroke="#c96208" /><circle cx="22" cy="14" r="1.800" fill="#f28c1e" /></>],
  ["Power Apps", <path d="M10 1.500H14L23 12L14 22.500H10L1 12ZM10 1.500L8 7L12.500 12L8 17L10 22.500M14 1.500L17 7L12.500 12L17 17L14 22.500" fill={W} stroke="#86309b" strokeWidth="1.400" />],
  ["Power Automate", <path d="M2 2H16L23 11.500L16 21H2L9 11.500ZM16 2L5 17H13L20 8M9 11.500L2 21" fill={W} stroke="#1583cf" strokeWidth="1.500" strokeLinejoin="round" />],
];

function Toggle({ on, label }: { on: boolean; label: string }) {
  return (
    <label className="mb-3.5 flex h-5 items-center justify-between pr-[27px] pl-[15px] text-sm">
      {label}
      <span className="grid">
        <input type="checkbox" role="switch" defaultChecked={on} className="col-start-1 row-start-1 h-5 w-10 appearance-none rounded-full border border-[#605e5c] bg-white checked:border-[#117865] checked:bg-[#117865]" />
        <span className={`pointer-events-none col-start-1 row-start-1 flex items-center justify-between px-1.5 text-[11px] leading-5 ${on ? "flex-row-reverse text-white" : "text-[#605e5c]"}`}>
          <span className={`size-2.5 rounded-full ${on ? "bg-white" : "bg-[#605e5c]"}`} />
          {on ? "On" : "Off"}
        </span>
      </span>
    </label>
  );
}

function Visualizations() {
  return (
    <aside className="flex w-[227px] shrink-0 flex-col border-x border-[#dddbd9] bg-[#f3f2f1] text-[#323130]">
      <div className="flex h-[50px] items-center justify-between pr-2.5 pl-2.5">
        <h2 className="text-lg font-semibold text-[#252423]">Visualizations</h2>
        <button type="button" aria-label="Collapse visualizations">
          <Chevrons />
        </button>
      </div>
      <h3 className="pl-2.5 text-sm leading-4 font-medium text-[#252423]">Build visual</h3>
      <div className="mt-1.5 flex items-center pl-2.5">
        <button type="button" aria-label="Build visual" className="flex size-10 items-center justify-center rounded-xs bg-[#d2d0ce]">
          <svg viewBox="0 0 30 30" className="size-[30px]" fill="#117865" stroke="#252423" strokeWidth="1.500">
            <path d="M0 1H24" />
            <path d="M1 7H29V16H1ZM1 20.500H29V29H1Z" strokeDasharray="3 1.500" />
          </svg>
        </button>
        <button type="button" aria-label="Format visual" className="ml-12">
          <svg viewBox="0 0 30 30" className="size-[30px]" fill="none" stroke="#323130" strokeWidth="1.700">
            <path d="M6 29H1V1H13L22 10M13 1V10H21M29 11L16 23L19 26L30 12ZM16 23C12 22 12 27 7 28C12 31 19 30 19 26" />
          </svg>
        </button>
      </div>
      <svg viewBox="0 0 225 12" className="mt-1.5 h-3 w-full shrink-0" preserveAspectRatio="xMinYMid slice" fill="none" stroke="#8a8886" aria-hidden="true">
        <path d="M0 9.500H20L30 .500L40 9.500H225" />
      </svg>
      <div className="mt-3 grid w-[224px] grid-cols-6 gap-y-[11px] pl-3.5">
        {vizIcons.map(([name, art]) => (
          <button key={name} type="button" aria-label={name} className="h-6">
            <svg viewBox="0 0 24 24" className="size-6 overflow-visible">
              {art}
            </svg>
          </button>
        ))}
      </div>
      <button type="button" aria-label="More visuals" className="mt-3.5 ml-4 flex h-3 w-5 items-center">
        <svg viewBox="0 0 18 4" className="w-[18px]" fill="#252423">
          <path d="M0 1H2V3H0ZM8 1H10V3H8ZM16 1H18V3H16Z" />
        </svg>
      </button>
      <hr className="mt-[19px] border-[#dddbd9]" />
      <h4 className="mt-3 pl-[15px] text-sm leading-[18px]">Values</h4>
      <div className="mt-[7px] mr-1.5 ml-[5px] flex h-9 items-center rounded-xs border border-dashed border-[#c2c0be] bg-white pl-3 text-sm">Add data fields here</div>
      <h4 className="mt-3.5 mb-3 pl-[15px] text-sm leading-[18px] font-medium text-[#484644]">Drill through</h4>
      <Toggle on={false} label="Cross-report" />
      <Toggle on label="Keep all filters" />
      <div className="mr-1.5 ml-[5px] flex h-8 items-center rounded-xs border border-dashed border-[#c2c0be] bg-white pl-2.5 text-sm whitespace-nowrap">
        Add drill-through fields here
      </div>
    </aside>
  );
}

function DataPane() {
  return (
    <aside className="w-[225px] shrink-0 bg-[#f3f2f1] text-[#323130]">
      <div className="flex h-[50px] items-center justify-between pr-2.5 pl-[11px]">
        <h2 className="text-lg font-semibold text-[#252423]">Data</h2>
        <button type="button" aria-label="Collapse data">
          <Chevrons />
        </button>
      </div>
      <label className="mx-[5px] mt-[7px] flex h-[30px] items-center gap-2 rounded border border-[#d1d1d1] border-b-[#616161] bg-white px-3.5">
        <svg viewBox="0 0 18 18" className="size-[18px]" fill="none" stroke="#616161" strokeWidth="1.400" aria-hidden="true">
          <circle cx="7.500" cy="7.500" r="6.500" />
          <path d="M12 12L17.500 17.500" />
        </svg>
        <input aria-label="Search data" placeholder="Search" className="min-w-0 flex-1 text-base outline-none placeholder:text-[#707070]" />
      </label>
      <button type="button" className="mt-4 ml-[19px] flex h-5 items-center text-sm">
        <svg viewBox="0 0 8 14" className="w-2" fill="none" stroke="#616161" strokeWidth="1.200" aria-hidden="true">
          <path d="M1 0L7.500 7L1 14" />
        </svg>
        <svg viewBox="0 0 16 16" className="mr-[7px] ml-[9px] size-4" fill="none" stroke="#323130" strokeWidth="1.400" aria-hidden="true">
          <rect x="1" y="1" width="14" height="14" rx="3" />
          <path d="M1 5.500H15M1 10.500H15M5.500 1V15M10.500 1V15" />
        </svg>
        ChurnOut
      </button>
    </aside>
  );
}

const notes = [
  "Senior subscribers should be paid attention to and taken into account when creating new plans .",
  "Customers that made more than three calls to your customer service in a short period of time should receive special attention.",
  "Since monthly subscribers are not commited to our company so pay attention to annually ones.",
];

function Canvas() {
  return (
    <main className="flex flex-1 flex-col bg-white pt-[74px] text-[#252423]">
      <h1 className="pl-[15px] text-[21px] leading-8 font-bold">Recommendations:</h1>
      <ul className="mt-4 ml-[31px] w-[880px] text-lg leading-[26px]">
        {notes.map((n) => (
          <li key={n} className="mb-4 flex gap-1">
            <span aria-hidden="true" className="mt-[14px] -ml-[7px] size-[3px] shrink-0 bg-[#252423]" />
            {n}
          </li>
        ))}
      </ul>
      <div className="mt-auto mr-px mb-[88px] ml-px border-b-2 border-dotted border-[#605e5c]" />
    </main>
  );
}

function PageTabs() {
  const icon = "flex h-[38px] items-center justify-center";
  return (
    <div className="flex h-11 shrink-0 bg-[#f3f2f1] text-sm text-[#252423]">
      <div className="flex w-[159px] items-start">
        <button type="button" aria-label="Desktop layout" className={`${icon} ml-[13px] w-[30px] border-b-3 border-[#117865]`}>
          <svg viewBox="0 0 24 18" className="w-6" fill="none" stroke="#605e5c" strokeWidth="1.500">
            <path d="M1 1H23V14H1ZM12 14V17M8 17.200H16" />
          </svg>
        </button>
        <button type="button" aria-label="Mobile layout" className={`${icon} ml-[31px] w-[17px]`}>
          <svg viewBox="0 0 17 26" className="w-[17px]" fill="none" stroke="#605e5c" strokeWidth="1.600">
            <rect x="1" y="1" width="15" height="24" rx="1" />
            <path d="M7 22H10" />
          </svg>
        </button>
        <button type="button" aria-label="Previous pages" className="mt-4 ml-[26px]">
          <svg viewBox="0 0 6 12" className="h-3" fill="#c2c0be"><path d="M6 1V11L0 6Z" /></svg>
        </button>
        <button type="button" aria-label="Next pages" className="mt-4 ml-[22px]">
          <svg viewBox="0 0 6 12" className="h-3" fill="#c2c0be"><path d="M0 1V11L6 6Z" /></svg>
        </button>
      </div>
      <div className="grid w-[669px] grid-cols-7">
        {[1, 2, 3, 4, 5, 6, 7].map((n) => (
          <button key={n} type="button" className="border-l border-[#b3b0ad] bg-white pt-0.5">
            Page {n}
          </button>
        ))}
      </div>
      <div className="relative w-[164px] border-b-5 border-l border-b-[#117865] border-l-[#b3b0ad] bg-white">
        <button type="button" className="size-full pt-1.5">Recomendations</button>
        <button type="button" aria-label="Delete page" className="absolute top-1 right-1.5 text-xs leading-4 font-semibold">x</button>
      </div>
      <button type="button" aria-label="New page" className="flex w-[49px] items-center justify-center bg-[#117865]">
        <svg viewBox="0 0 14 14" className="size-3.5" stroke="#fff" strokeWidth="3"><path d="M0 7H14M7 0V14" /></svg>
      </button>
    </div>
  );
}

function StatusBar() {
  return (
    <footer className="flex h-7 shrink-0 items-center border-t border-[#dddbd9] bg-[#f3f2f1] pr-[22px] pl-[5px] text-sm text-[#484644]">
      <span className="flex-1 pt-0.5">Page 8 of 8</span>
      <button type="button" aria-label="Zoom out" className="text-base leading-4 font-semibold">-</button>
      <span className="relative mx-1.5 flex w-[124px] items-center">
        <span className="absolute left-[62px] h-2.5 w-px bg-[#605e5c]" />
        <input
          type="range"
          aria-label="Zoom"
          min="0"
          max="100"
          defaultValue="35"
          className="h-4 w-full appearance-none bg-[linear-gradient(#605e5c,#605e5c)] bg-[length:100%_1px] bg-center bg-no-repeat [&::-webkit-slider-thumb]:h-[13px] [&::-webkit-slider-thumb]:w-[5px] [&::-webkit-slider-thumb]:appearance-none [&::-webkit-slider-thumb]:bg-[#605e5c]"
        />
      </span>
      <button type="button" aria-label="Zoom in" className="text-base leading-4 font-semibold">+</button>
      <span className="ml-[18px]">73%</span>
      <button type="button" aria-label="Fit to page" className="ml-6">
        <svg viewBox="0 0 20 15" className="w-5" fill="none" stroke="#605e5c" strokeWidth="1.300">
          <path d="M.700 .700H19.300V14.300H.700ZM3.500 6V3.500H6.500M13.500 3.500H16.500V6M16.500 9V11.500H13.500M6.500 11.500H3.500V9" />
        </svg>
      </button>
    </footer>
  );
}

/* ---------- Taskbar ---------- */

function Chrome({ badge, color }: { badge?: string; color?: string }) {
  return (
    <span className="relative">
      <svg viewBox="0 0 32 32" className="size-[30px]" aria-hidden="true">
        <path d="M3 8.500A15 15 0 0 1 29 8.500H16A7.500 7.500 0 0 0 9.500 19.750Z" fill="#e23f33" />
        <path d="M29 8.500A15 15 0 0 1 16 31L22.500 19.750A7.500 7.500 0 0 0 16 8.500Z" fill="#fcc31e" />
        <path d="M16 31A15 15 0 0 1 3 8.500L9.500 19.750A7.500 7.500 0 0 0 22.500 19.750Z" fill="#2ba24c" />
        <circle cx="16" cy="16" r="7.500" fill="#fff" />
        <circle cx="16" cy="16" r="6" fill="#2f7de9" />
      </svg>
      {badge && (
        <span className={`absolute -top-1.5 -right-1.5 flex size-5 items-center justify-center rounded-full text-[11px] font-semibold text-[#e8d8d4] ${color}`}>{badge}</span>
      )}
    </span>
  );
}

const apps: { name: string; art: ReactNode; dot?: boolean; active?: boolean }[] = [
  {
    name: "Task view",
    art: (
      <svg viewBox="0 0 30 30" className="size-[30px]">
        <rect x="7" y="1" width="23" height="20" rx="1.500" fill="#f1f1f1" />
        <rect x="0" y="9" width="22" height="20" rx="1.500" fill="#6f7173" />
        <path d="M7 9H22V21H7Z" fill="#b9babb" />
      </svg>
    ),
  },
  {
    name: "Edge",
    art: (
      <svg viewBox="0 0 30 30" className="size-[30px]">
        <circle cx="15" cy="15" r="15" fill="#1479cf" />
        <path d="M0 14C1 -2 28 -5 30 13C30 20 22 21 19 18C22 14 18 8 12 8C6 8 1 10 0 14Z" fill="#2fb6e8" />
        <path d="M18 1C26 3 30 8 30 13C30 20 22 21 19 18C22 14 20 10 17 9Z" fill="#5bd07a" />
        <path d="M11 12C8 18 12 27 27 24C21 32 7 32 4 25C2 18 6 12 11 12Z" fill="#124f9c" />
        <path d="M18 18C21 21 27 21 30 17C30 19 29 22 27 24C22 25 14 24 14 17C15 12 20 13 18 18Z" fill="#1d2125" />
      </svg>
    ),
  },
  {
    name: "File Explorer",
    dot: true,
    art: (
      <svg viewBox="0 0 30 30" className="size-[30px]">
        <path d="M0 4C0 3 1 2 2 2H10L13 5H28C29 5 30 6 30 7V15H0Z" fill="#e59f12" />
        <path d="M0 8H30V27C30 28 29 29 28 29H2C1 29 0 28 0 27Z" fill="#fbd04b" />
        <path d="M5 29V23C5 22 6 21 7 21H23C24 21 25 22 25 23V29Z" fill="#1673c4" />
        <path d="M9 25H21" stroke="#0c4f92" strokeWidth="2" />
      </svg>
    ),
  },
  { name: "Spotify", dot: true, art: <FaSpotify className="size-[29px] text-[#1ed760]" /> },
  { name: "WhatsApp", art: <FaWhatsapp className="size-[32px] text-[#25d366]" /> },
  { name: "Chrome", art: <Chrome /> },
  {
    name: "PyCharm",
    art: (
      <svg viewBox="0 0 30 30" className="size-[30px]">
        <path d="M2 6L9 1L14 5L20 1L24 6L30 10V20L29 29H4L0 22Z" fill="#21d789" />
        <path d="M22 7L30 10L28 20L22 24Z" fill="#28b6f0" />
        <path d="M2 20L1 28L20 29L28 28L25 20Z" fill="#e6e04c" />
        <rect x="6" y="5" width="19" height="20" fill="#000" />
        <text x="7" y="15" fontSize="10" fontWeight="700" fontFamily="Open Sans, sans-serif" fill="#fff">PC</text>
        <path d="M8 22H15" stroke="#fff" strokeWidth="1.500" />
      </svg>
    ),
  },
  {
    name: "Discord",
    art: (
      <span className="flex size-[30px] items-center justify-center rounded-full bg-[#5865f2]">
        <FaDiscord className="size-[18px] text-white" />
      </span>
    ),
  },
  {
    name: "VMware",
    dot: true,
    art: (
      <svg viewBox="0 0 30 30" className="size-[30px]" fill="none" strokeWidth="5">
        <rect x="9.500" y="2.500" width="18" height="18" rx="2" stroke="#1a8bd6" />
        <rect x="2.500" y="10.500" width="17" height="17" rx="2" stroke="#f28c1e" />
        <path d="M9.500 13V20.500H17" stroke="#1a8bd6" />
      </svg>
    ),
  },
  { name: "Chrome profile e", dot: true, art: <Chrome badge="e" color="bg-[#b8331f]" /> },
  { name: "Chrome profile E", dot: true, art: <Chrome badge="E" color="bg-[#15599c]" /> },
  {
    name: "Power BI",
    active: true,
    art: (
      <svg viewBox="0 0 30 30" className="size-[30px]">
        <path d="M16 0H25C26 0 26 1 26 1V30H16Z" fill="#d99422" />
        <path d="M10 7H18C19 7 19 8 19 8V30H10Z" fill="#f5bf2c" />
        <path d="M3 15H11C12 15 12 16 12 16V30H3C2 30 2 29 2 29V16Z" fill="#fbdc74" />
      </svg>
    ),
  },
];

function Taskbar() {
  return (
    <footer className="flex h-[62px] shrink-0 items-stretch border-t-2 border-black bg-[#1d2125] text-sm text-white">
      <div className="flex w-[20.7%] items-center">
        <button type="button" className="ml-7 flex items-center gap-2 text-left">
          <span className="relative">
            <svg viewBox="0 0 28 30" className="w-7" aria-hidden="true">
              <circle cx="12" cy="12" r="11.500" fill="#f5a117" />
              <path d="M7 29C0 29 0 20 7 20C8 13 18 12 20 19C29 19 29 29 21 29Z" fill="#b9d9f7" />
            </svg>
            <span className="absolute -top-2 -right-1 flex size-5 items-center justify-center rounded-full bg-[#fb929c] text-xs text-black">1</span>
          </span>
          <span className="flex flex-col leading-[21px]">
            <span>25°C</span>
            <span dir="rtl" lang="ar" className="font-['DejaVu_Sans',sans-serif] text-sm leading-[21px] text-[#cfd0d1]">مشمس جزئيًا</span>
          </span>
        </button>
      </div>
      <div className="flex items-center">
        <button type="button" aria-label="Start">
          <svg viewBox="0 0 30 30" className="size-[30px]" fill="#35b8f5">
            <path d="M0 0H14.300V14.300H0Z" fill="#5fd4fb" />
            <path d="M15.700 0H30V14.300H15.700ZM0 15.700H14.300V30H0ZM15.700 15.700H30V30H15.700Z" />
          </svg>
        </button>
        <label className="mr-0.5 ml-4 flex h-10 w-[275px] items-center rounded-full border border-[#4a4e51] bg-[#3b3f42] pr-2 pl-3.5">
          <svg viewBox="0 0 20 20" className="size-5" fill="none" stroke="#e8e8e8" strokeWidth="2" aria-hidden="true">
            <circle cx="8.500" cy="8.500" r="7" />
            <path d="M13.500 13.500L19 19" />
          </svg>
          <input aria-label="Search Windows" placeholder="Search" className="ml-2.5 min-w-0 flex-1 bg-transparent text-base outline-none placeholder:text-[#d4d5d6]" />
          <svg viewBox="0 0 58 30" className="w-[58px]" fill="none" aria-hidden="true">
            <path d="M2 14L6 11L8 15L8 9L14 17L20 15L18 22L27 17L30 23L37 15L40 22L45 12L44 3L47 2L50 8L50 17L56 13L54 22L50 27L46 23L44 29L41 24L34 25L32 29L28 24L20 27L18 24L13 27L14 22L6 24L9 19L3 19Z" fill="#a59a2c" />
            <path d="M6 17L14 21L22 20L28 25L36 20L43 24L48 16M12 18L9 12M46 8V18M30 24L34 17" stroke="#e7d74c" strokeWidth="2" />
            <path d="M14 23L20 22M38 24L42 19M50 23L53 18" stroke="#3c7a45" strokeWidth="2" />
            <path d="M12 3L20 7L25 5L28 7L34 2L31 9C29 14 21 14 17 8Z" fill="#4f9fe0" />
          </svg>
        </label>
        {apps.map((a) => (
          <button key={a.name} type="button" aria-label={a.name} className="flex w-[55px] justify-center">
            <span className={`relative flex size-[50px] items-center justify-center rounded-md ${a.active ? "border border-[#3a3f42] bg-[#2c3134]" : ""}`}>
              {a.art}
              {a.dot && <span className="absolute bottom-0 h-1 w-2 rounded-full bg-[#9a9c9d]" />}
              {a.active && <span className="absolute bottom-0 h-1 w-5 rounded-full bg-[#3fb9f7]" />}
            </span>
          </button>
        ))}
      </div>
      <div className="flex flex-1 items-center justify-end pr-6">
        <button type="button" aria-label="Hidden icons">
          <svg viewBox="0 0 14 9" className="w-3.5" fill="none" stroke="#fff" strokeWidth="1.700"><path d="M1 8L7 1.500L13 8" /></svg>
        </button>
        <button type="button" aria-label="Cloud sync" className="ml-[22px]">
          <svg viewBox="0 0 22 18" className="w-[22px]">
            <path d="M4 13C-1 13 -1 6 5 6C6 0 15 0 16 5C20 5 21 9 20 12Z" fill="#a9abac" />
            <circle cx="15.500" cy="12.500" r="5.500" fill="#fff" />
            <path d="M12.500 12A3 3 0 0 1 18 11M18.500 13A3 3 0 0 1 13 14.500" fill="none" stroke="#1673c4" strokeWidth="1.500" />
          </svg>
        </button>
        <button type="button" aria-label="Updates" className="ml-[17px]">
          <svg viewBox="0 0 22 22" className="size-[22px]" fill="none" stroke="#fff" strokeWidth="1.400">
            <path d="M2 10A9 9 0 0 1 19 6M20 1V6H15M8 20A9 9 0 0 1 3 16M3 21V16H8" />
            <circle cx="16.500" cy="16.500" r="5" fill="#f59a13" stroke="none" />
          </svg>
        </button>
        <button type="button" className="ml-[22px] text-sm">ENG</button>
        <button type="button" aria-label="Network, volume, battery" className="ml-[21px] flex items-center gap-2.5">
          <svg viewBox="0 0 20 16" className="w-5" fill="none" stroke="#fff" strokeWidth="1.500">
            <path d="M1 6C6 0 14 0 19 6M4 9C8 5 12 5 16 9M7 12C9 10 11 10 13 12" />
            <circle cx="10" cy="14" r="1.300" fill="#fff" stroke="none" />
          </svg>
          <svg viewBox="0 0 20 16" className="w-5" fill="none" stroke="#fff" strokeWidth="1.400">
            <path d="M1 5.500H4L9 1V15L4 10.500H1ZM11.500 5C13 7 13 9 11.500 11M14 3C17 6 17 10 14 13M16.500 1C20 5 20 11 16.500 15" />
          </svg>
          <svg viewBox="0 0 20 16" className="w-5" fill="none" stroke="#fff" strokeWidth="1.500">
            <rect x="1" y="2" width="16" height="12" rx="3" />
            <rect x="3" y="4" width="9.500" height="8" rx="1" fill="#fff" stroke="none" />
            <path d="M19 6V10" strokeWidth="2" />
          </svg>
        </button>
        <button type="button" className="ml-[21px] flex flex-col text-right text-sm leading-5">
          <span>4:12 PM</span>
          <span>11/13/2024</span>
        </button>
        <button type="button" aria-label="Notifications" className="ml-2.5">
          <svg viewBox="0 0 18 20" className="w-[18px]" fill="#f3f3f3">
            <path d="M9 2C4 2 3 5 3 9V12L1 16H17L15 12V9C15 5 14 2 9 2ZM6 17H12C12 20 6 20 6 17Z" />
            <path d="M5 7H9L5 12H9" fill="none" stroke="#1d2125" strokeWidth="1.300" />
            <path d="M12 1H16L12 6H17" fill="none" stroke="#f3f3f3" strokeWidth="1.300" />
          </svg>
        </button>
        <button type="button" aria-label="Copilot preview" className="relative ml-5">
          <CopilotLogo id="tray" className="size-8" />
          <span className="absolute right-0 -bottom-0.5 rounded-xs bg-[#fbc02d] px-0.5 text-[9px] leading-[11px] font-bold text-black">PRE</span>
        </button>
      </div>
    </footer>
  );
}

function Watermark() {
  return (
    <div className="pointer-events-none absolute bottom-6 left-[845px] z-20 flex w-[230px] flex-col items-center text-[#969696]/50" aria-hidden="true">
      <span dir="rtl" lang="ar" className="font-['DejaVu_Sans',sans-serif] text-[64px] leading-[76px] font-bold text-[#b4b4b4]/45">مستقل</span>
      <span className="font-['Liberation_Sans',sans-serif] text-[38px] leading-9 font-bold">mostaql.com</span>
    </div>
  );
}

export default function App() {
  return (
    <div className="relative flex min-h-screen flex-col bg-white font-['Open_Sans','Noto_Sans',sans-serif]">
      <TitleBar />
      <Ribbon />
      <div className="flex flex-1">
        <ViewRail />
        <div className="flex min-w-0 flex-1 flex-col">
          <div className="flex flex-1">
            <Canvas />
            <Filters />
          </div>
          <PageTabs />
        </div>
        <Visualizations />
        <DataPane />
      </div>
      <StatusBar />
      <Taskbar />
      <Watermark />
    </div>
  );
}
